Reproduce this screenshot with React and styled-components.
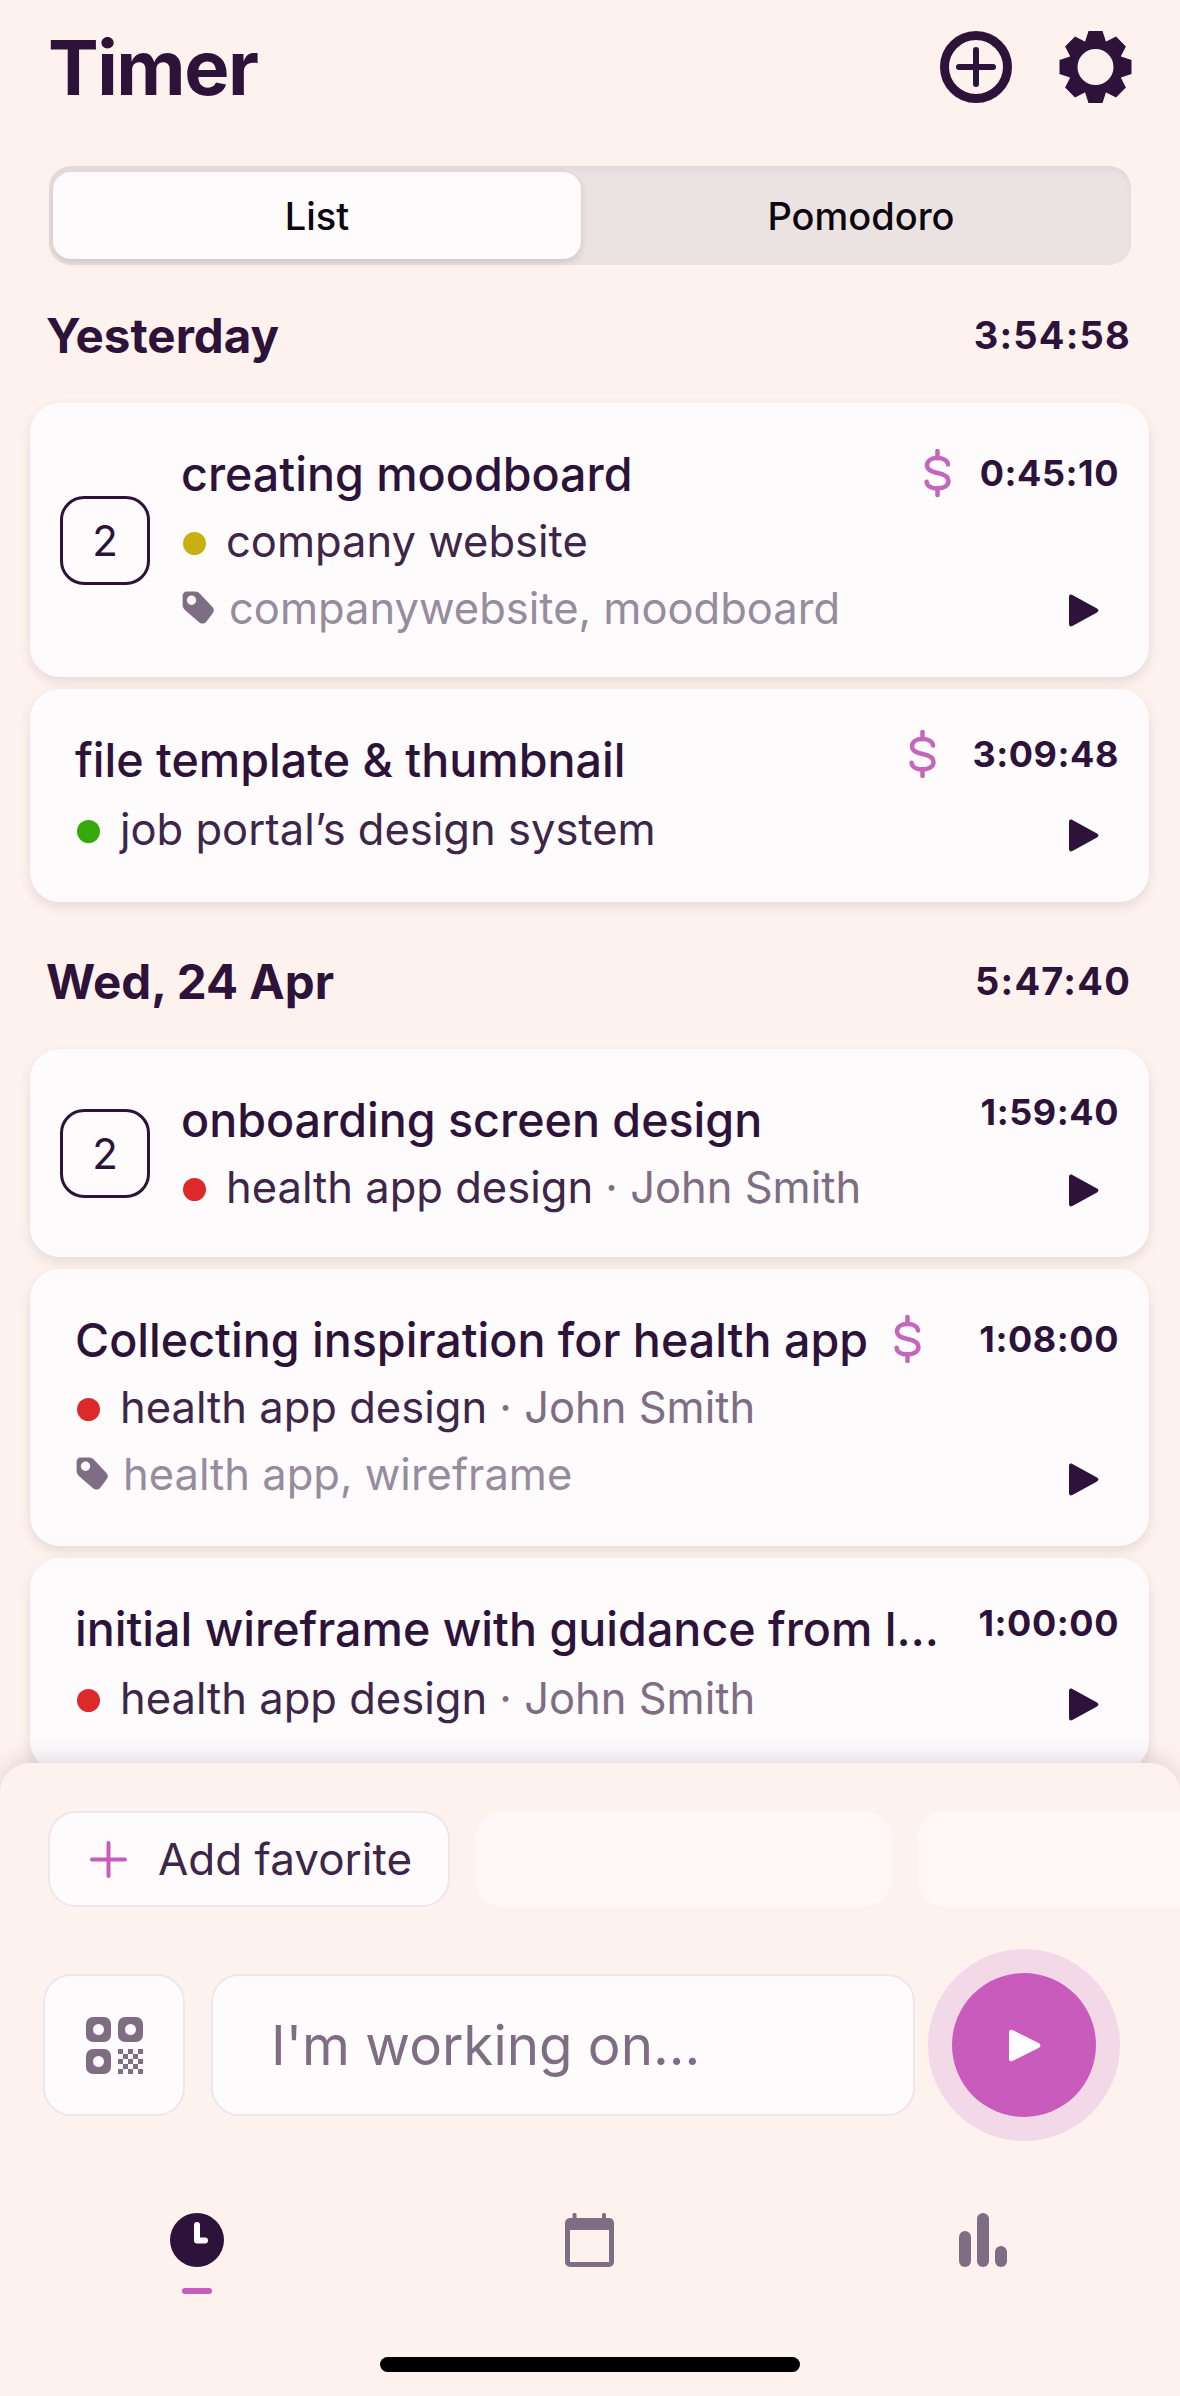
import styled, { createGlobalStyle } from "styled-components";

const dark = "#2d1239";
const muted = "#7f6d84";
const faint = "#978b9e";
const accent = "#c95bbd";
const pageBg = "#fef2ef";
const cardBg = "#fefbfd";

const GlobalStyle = createGlobalStyle`
  html, body {
    margin: 0;
    padding: 0;
    background: ${pageBg};
  }
  * {
    box-sizing: border-box;
  }
`;

const Screen = styled.div`
  width: 1180px;
  height: 2396px;
  display: flex;
  flex-direction: column;
  overflow: hidden;
  background: ${pageBg};
  color: ${dark};
  font-family: Inter, "Liberation Sans", sans-serif;
`;

const Header = styled.header`
  height: 166px;
  flex: none;
  display: flex;
  justify-content: space-between;
  padding: 22px 48px 0 48px;
`;

const PageTitle = styled.h1`
  margin: 0;
  font-size: 76px;
  line-height: 90px;
  font-weight: 700;
  letter-spacing: -1.5px;
`;

const HeaderIcons = styled.div`
  display: flex;
  gap: 47px;
  padding-top: 9px;
`;

const Segmented = styled.div`
  flex: none;
  width: 1082px;
  height: 99px;
  margin-left: 49px;
  padding: 6px 4px;
  display: grid;
  grid-template-columns: 528px 1fr;
  column-gap: 14px;
  align-items: stretch;
  border-radius: 22px;
  background: #ebe2e2;
  box-shadow: inset 0 4px 5px rgba(70, 40, 60, 0.05);
`;

const Segment = styled.div`
  display: flex;
  align-items: center;
  justify-content: center;
  font-size: 38px;
  font-weight: 500;
  color: #0c0610;
  border-radius: 18px;
  background: ${(p) => (p.$active ? cardBg : "transparent")};
  box-shadow: ${(p) => (p.$active ? "0 3px 7px rgba(60, 30, 50, 0.16)" : "none")};
`;

const DayHead = styled.div`
  flex: none;
  height: 136px;
  margin-top: ${(p) => p.$top}px;
  padding: 0 49px 0 46px;
  display: flex;
  align-items: center;
  justify-content: space-between;
`;

const DayName = styled.div`
  font-size: 47.5px;
  font-weight: 700;
`;

const DayTotal = styled.div`
  font-size: 38px;
  font-weight: 700;
  letter-spacing: 1.2px;
`;

const List = styled.main`
  flex: 1;
  min-height: 0;
  overflow: hidden;
`;

const Card = styled.article`
  width: 1119px;
  height: ${(p) => p.$height}px;
  margin: 0 0 12px 30px;
  padding-left: ${(p) => (p.$grouped ? 30 : 45)}px;
  display: flex;
  border-radius: 30px;
  background: ${cardBg};
  box-shadow: 0 5px 12px rgba(70, 40, 60, 0.12);
`;

const CountBox = styled.div`
  flex: none;
  align-self: center;
  width: 90px;
  height: 89px;
  margin-right: 31px;
  display: flex;
  align-items: center;
  justify-content: center;
  border: 3px solid ${dark};
  border-radius: 24px;
  font-size: 42px;
`;

const Body = styled.div`
  flex: 1;
  min-width: 0;
  padding: 38px 33px 0 0;
`;

const TitleRow = styled.div`
  display: flex;
  align-items: flex-start;
  gap: 26px;
  height: ${(p) => p.$height || 67}px;
`;

const Title = styled.div`
  min-width: 0;
  font-size: 46.6px;
  font-weight: 500;
  line-height: 66px;
  white-space: nowrap;
`;

const InlineBillable = styled.span`
  flex: none;
  padding-top: 8px;
`;

const MetaRow = styled.div`
  display: flex;
  align-items: center;
  height: 66.5px;
  padding-left: 2px;
  font-size: 43.5px;
  white-space: nowrap;
  color: #3d2648;
`;

const Dot = styled.span`
  flex: none;
  width: 23px;
  height: 23px;
  margin: 5px 20px 0 0;
  border-radius: 50%;
  background: ${(p) => p.$color};
`;

const Client = styled.span`
  color: ${muted};
`;

const Tags = styled.span`
  margin-left: 15px;
  color: ${faint};
`;

const Side = styled.div`
  flex: none;
  display: flex;
  flex-direction: column;
  justify-content: space-between;
  align-items: flex-end;
  padding: ${(p) => p.$top}px 30px 50px 0;
`;

const TimeRow = styled.div`
  display: flex;
  align-items: center;
  height: 48px;
  gap: ${(p) => p.$gap || 29}px;
`;

const Time = styled.div`
  font-size: 36px;
  font-weight: 700;
  letter-spacing: 0.55px;
`;

const PlayMark = styled.svg`
  display: block;
  margin-right: 20px;
`;

const Panel = styled.section`
  flex: none;
  height: 633px;
  position: relative;
  padding-top: 48px;
  background: ${pageBg};
  border-radius: 30px 30px 0 0;
  box-shadow: 0 -7px 20px rgba(70, 40, 60, 0.13);
`;

const Favorites = styled.div`
  display: flex;
  gap: 25px;
  padding-left: 48px;
  overflow: hidden;
`;

const AddFavorite = styled.div`
  flex: none;
  width: 402px;
  height: 96px;
  padding-left: 40px;
  display: flex;
  align-items: center;
  gap: 31px;
  border: 2px solid #eee6ec;
  border-radius: 28px;
  background: ${cardBg};
  font-size: 44px;
  color: #3d2648;
`;

const EmptyFavorite = styled.div`
  flex: none;
  width: 417px;
  height: 96px;
  border-radius: 28px;
  background: #fff8f7;
`;

const Composer = styled.div`
  display: flex;
  align-items: center;
  height: 144px;
  margin-top: 66px;
  padding-left: 43px;
`;

const QrButton = styled.div`
  flex: none;
  width: 142px;
  height: 142px;
  margin-right: 26px;
  display: flex;
  align-items: center;
  justify-content: center;
  border: 2px solid #eee6ec;
  border-radius: 28px;
  background: ${cardBg};
`;

const Input = styled.div`
  flex: none;
  width: 704px;
  height: 142px;
  margin-right: 37px;
  padding-left: 58px;
  display: flex;
  align-items: center;
  border: 2px solid #eee6ec;
  border-radius: 28px;
  background: ${cardBg};
  font-size: 54.7px;
  color: ${muted};
`;

const StartButton = styled.div`
  flex: none;
  width: 144px;
  height: 144px;
  display: flex;
  align-items: center;
  justify-content: center;
  border-radius: 50%;
  background: ${accent};
  box-shadow: 0 0 0 24px #f3d8e8;
`;

const Nav = styled.nav`
  display: grid;
  grid-template-columns: repeat(3, 1fr);
  margin-top: 96px;
`;

const NavItem = styled.div`
  height: 81px;
  display: flex;
  flex-direction: column;
  align-items: center;
`;

const NavMark = styled.div`
  width: 30px;
  height: 6px;
  margin-top: 21px;
  border-radius: 3px;
  background: ${accent};
`;

const HomeBar = styled.div`
  width: 420px;
  height: 15px;
  margin: 63px auto 0;
  border-radius: 8px;
  background: #000;
`;

const gearPath = (() => {
  const cx = 36.5;
  const cy = 36;
  const pts = [];
  for (let i = 0; i < 8; i++) {
    const a = (i * Math.PI) / 4;
    const at = (r, off) => [
      cx + r * Math.sin(a) + off * Math.cos(a),
      cy - r * Math.cos(a) + off * Math.sin(a),
    ];
    pts.push(at(25.5, -10.4), at(36, -7), at(36, 7), at(25.5, 10.4));
  }
  const outer = pts.map((p) => p.map((n) => n.toFixed(2)).join(" ")).join(" L");
  return `M${outer} Z M${cx - 18} ${cy} a18 18 0 1 0 36 0 a18 18 0 1 0 -36 0 Z`;
})();

const PlusCircleIcon = () => (
  <svg width="72" height="72" viewBox="0 0 72 72" fill="none" stroke={dark}>
    <circle cx="36" cy="36" r="31.5" strokeWidth="9" />
    <path d="M36 19V53M19 36H53" strokeWidth="6" strokeLinecap="round" />
  </svg>
);

const GearIcon = () => (
  <svg width="73" height="72" viewBox="0 0 73 72">
    <path d={gearPath} fill={dark} fillRule="evenodd" />
  </svg>
);

const DollarIcon = () => (
  <svg width="27" height="48" viewBox="0 0 27 48" fill="none" stroke="#c466bc" strokeWidth="4.5" strokeLinecap="round" style={{ display: "block" }}>
    <path d="M13.5 2V9M13.5 39V46" />
    <path d="M24 15.5C23.5 11.5 19 9 13.5 9C7 9 3 12 3 16.5C3 21 7.5 22.8 13.5 24C19.5 25.2 24.5 27 24.5 32C24.5 36.5 20 39.5 13.5 39.5C7 39.5 3 36.8 2.6 32.8" />
  </svg>
);

const TagIcon = () => (
  <svg width="32" height="33" viewBox="0 0 32 33" style={{ flex: "none", marginLeft: -1 }}>
    <path
      fillRule="evenodd"
      fill={muted}
      d="M5 0.5H13C15 0.5 16.5 1.3 18 2.8L30 15.5C32.3 18 32.3 20.3 30.5 22.6L24.5 30.5C22.5 33 19.3 33.2 17 31.2L3.5 19.5C1.6 17.8 0.6 16 0.6 13.5V5C0.6 2.3 2.3 0.5 5 0.5ZM9.5 4.6a4.7 4.7 0 1 0 0 9.4a4.7 4.7 0 1 0 0 -9.4Z"
    />
  </svg>
);

const PlayIcon = () => (
  <PlayMark width="31" height="33" viewBox="0 0 31 33">
    <path d="M1 3C1 .8 2.6 0 4.4 1L29 14.6C31 15.8 31 17.2 29 18.4L4.4 32C2.6 33 1 32.2 1 30Z" fill={dark} />
  </PlayMark>
);

const PlusIcon = () => (
  <svg width="37" height="37" viewBox="0 0 37 37" stroke={accent} strokeWidth="4" strokeLinecap="round">
    <path d="M18.5 2V35M2 18.5H35" />
  </svg>
);

const checker = [];
for (let r = 0; r < 5; r++) {
  for (let c = 0; c < 5; c++) {
    if ((r + c) % 2 === 0) checker.push([r, c]);
  }
}

const qrFinder = "M7 0H18a7 7 0 0 1 7 7V18a7 7 0 0 1 -7 7H7a7 7 0 0 1 -7 -7V7a7 7 0 0 1 7 -7ZM12.5 7a5.5 5.5 0 1 0 0 11a5.5 5.5 0 1 0 0 -11Z";

const QrIcon = () => (
  <svg width="57" height="57" viewBox="0 0 57 57" fill={muted}>
    <path fillRule="evenodd" d={qrFinder} />
    <path fillRule="evenodd" transform="translate(32 0)" d={qrFinder} />
    <path fillRule="evenodd" transform="translate(0 32)" d={qrFinder} />
    {checker.map(([r, c]) => (
      <rect key={`${r}-${c}`} x={32 + c * 5} y={32 + r * 5} width="5" height="5" />
    ))}
  </svg>
);

const StartIcon = () => (
  <svg width="32" height="33" viewBox="0 0 32 33" fill="#fff" style={{ marginLeft: 1 }}>
    <path d="M0 3.5C0 .8 2 0 4 1.2L29.5 14C32 15.5 32 17.5 29.5 19L4 31.8C2 33 0 32.2 0 29.5Z" />
  </svg>
);

const ClockIcon = () => (
  <svg width="54" height="54" viewBox="0 0 54 54" fill="none">
    <circle cx="27" cy="27" r="27" fill={dark} />
    <path d="M27 12V27.5H35" stroke="#fff" strokeWidth="6" strokeLinecap="round" strokeLinejoin="round" />
  </svg>
);

const CalendarIcon = () => (
  <svg width="49" height="54" viewBox="0 0 49 54" fill={muted}>
    <rect x="7.5" y="0" width="4" height="8" rx="1.5" />
    <rect x="37" y="0" width="4" height="8" rx="1.5" />
    <path
      fillRule="evenodd"
      d="M5 5H44a5 5 0 0 1 5 5V49a5 5 0 0 1 -5 5H5a5 5 0 0 1 -5 -5V10a5 5 0 0 1 5 -5ZM5 17V49H44V17Z"
    />
  </svg>
);

const ChartIcon = () => (
  <svg width="48" height="54" viewBox="0 0 48 54" fill={muted}>
    <rect x="0" y="18" width="12" height="36" rx="6" />
    <rect x="18" y="0" width="12" height="54" rx="6" />
    <rect x="36" y="33" width="12" height="21" rx="6" />
  </svg>
);

const TimeEntry = ({ entry }) => (
  <Card $height={entry.height} $grouped={!!entry.count}>
    {entry.count && <CountBox>{entry.count}</CountBox>}
    <Body>
      <TitleRow $height={entry.titleHeight}>
        <Title>{entry.title}</Title>
        {entry.inlineBillable && (
          <InlineBillable>
            <DollarIcon />
          </InlineBillable>
        )}
      </TitleRow>
      <MetaRow>
        <Dot $color={entry.color} />
        {entry.project}
        {entry.client && <Client>&nbsp;· {entry.client}</Client>}
      </MetaRow>
      {entry.tags && (
        <MetaRow>
          <TagIcon />
          <Tags>{entry.tags}</Tags>
        </MetaRow>
      )}
    </Body>
    <Side $top={entry.top}>
      <TimeRow $gap={entry.gap}>
        {entry.billable && <DollarIcon />}
        <Time>{entry.time}</Time>
      </TimeRow>
      <PlayIcon />
    </Side>
  </Card>
);

const yesterday = [
  {
    height: 274,
    top: 46,
    count: 2,
    title: "creating moodboard",
    color: "#c8b013",
    project: "company website",
    tags: "companywebsite, moodboard",
    billable: true,
    time: "0:45:10",
  },
  {
    height: 213,
    top: 41,
    gap: 36,
    titleHeight: 69,
    title: "file template & thumbnail",
    color: "#35a80c",
    project: "job portal’s design system",
    billable: true,
    time: "3:09:48",
  },
];

const wednesday = [
  {
    height: 208,
    top: 39,
    count: 2,
    title: "onboarding screen design",
    color: "#dc2a2a",
    project: "health app design",
    client: "John Smith",
    time: "1:59:40",
  },
  {
    height: 277,
    top: 46,
    title: "Collecting inspiration for health app",
    inlineBillable: true,
    color: "#dc2a2a",
    project: "health app design",
    client: "John Smith",
    tags: "health app, wireframe",
    time: "1:08:00",
  },
  {
    height: 213,
    top: 41,
    titleHeight: 69,
    title: "initial wireframe with guidance from l…",
    color: "#dc2a2a",
    project: "health app design",
    client: "John Smith",
    time: "1:00:00",
  },
];

export default function App() {
  return (
    <Screen>
      <GlobalStyle />
      <Header>
        <PageTitle>Timer</PageTitle>
        <HeaderIcons>
          <PlusCircleIcon />
          <GearIcon />
        </HeaderIcons>
      </Header>
      <Segmented>
        <Segment $active>List</Segment>
        <Segment>Pomodoro</Segment>
      </Segmented>
      <List>
        <DayHead $top={2}>
          <DayName>Yesterday</DayName>
          <DayTotal>3:54:58</DayTotal>
        </DayHead>
        {yesterday.map((entry) => (
          <TimeEntry key={entry.title} entry={entry} />
        ))}
        <DayHead $top={-1}>
          <DayName>Wed, 24 Apr</DayName>
          <DayTotal>5:47:40</DayTotal>
        </DayHead>
        {wednesday.map((entry) => (
          <TimeEntry key={entry.title} entry={entry} />
        ))}
      </List>
      <Panel>
        <Favorites>
          <AddFavorite>
            <PlusIcon />
            Add favorite
          </AddFavorite>
          <EmptyFavorite />
          <EmptyFavorite />
        </Favorites>
        <Composer>
          <QrButton>
            <QrIcon />
          </QrButton>
          <Input>I'm working on...</Input>
          <StartButton>
            <StartIcon />
          </StartButton>
        </Composer>
        <Nav>
          <NavItem>
            <ClockIcon />
            <NavMark />
          </NavItem>
          <NavItem>
            <CalendarIcon />
          </NavItem>
          <NavItem>
            <ChartIcon />
          </NavItem>
        </Nav>
        <HomeBar />
      </Panel>
    </Screen>
  );
}
